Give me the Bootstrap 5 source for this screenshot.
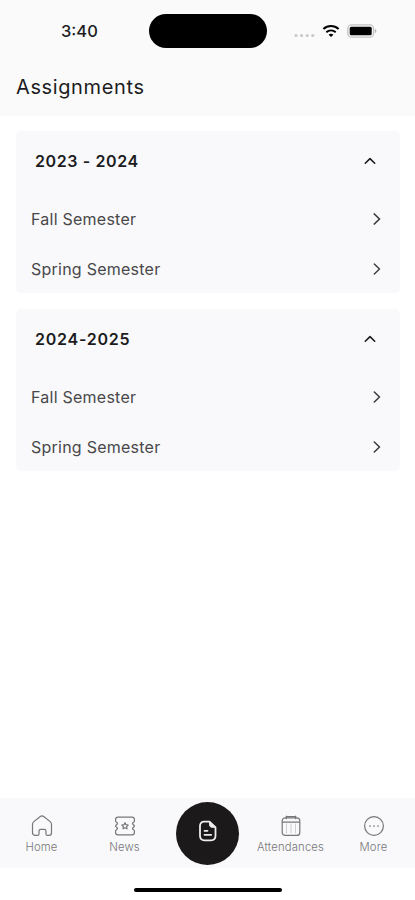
<!DOCTYPE html>
<html lang="en">
<head>
<meta charset="utf-8">
<meta name="viewport" content="width=device-width, initial-scale=1">
<title>Assignments</title>
<link href="https://cdn.jsdelivr.net/npm/bootstrap@5.3.0/dist/css/bootstrap.min.css" rel="stylesheet">
<style>
  body { font-family: Inter, "Liberation Sans", sans-serif; color: #1c1c1e; background: #fff; height: 900px; overflow: hidden; }
  svg { display: block; flex: none; fill: none; stroke: currentColor; stroke-linecap: round; stroke-linejoin: round; }
  .app-header { height: 116px; background: #fafafa; }
  .status-bar { height: 62px; padding: 0 38px 0 61px; }
  .clock { width: 88px; font-size: 16.5px; font-weight: 500; line-height: 20px; }
  .island { width: 118px; height: 34px; background: #000; }
  .status-icons { gap: 7px; color: #000; }
  .page-title { font-size: 20px; font-weight: 400; line-height: 24px; letter-spacing: .62px; padding: 13px 0 0 16px; margin: 0; }
  .year-list { padding: 14.5px 15px 0 16px; gap: 16px; }
  .year-card { background: #f9f9fb; border: 0; border-radius: 5px; height: 162px; }
  .year-head { height: 62px; padding: 0 24px 2px 19px; font-size: 16px; font-weight: 600; letter-spacing: .62px; }
  .year-head.compact { letter-spacing: .76px; }
  .term { height: 50px; padding: 2px 19px 0 15px; font-size: 16px; letter-spacing: .24px; color: #48484a; }
  .term svg { color: #3a3a3c; }
  .tab-bar { height: 70px; background: #f9f9fb; }
  .tab { flex: 1 0 0; min-width: 0; color: #77777a; padding-top: 17px; font-size: 11.3px; line-height: 14px; letter-spacing: .16px; font-weight: 300; }
  .tab span { margin-top: 3px; }
  .tab-main { width: 63px; height: 63px; background: #1c191a; color: #eee; }
  .home-zone { height: 32px; padding-top: 20px; }
  .home-line { width: 148px; height: 4px; background: #000; }
</style>
</head>
<body class="d-flex flex-column">
<header class="app-header">
  <div class="status-bar d-flex align-items-center">
    <div class="clock">3:40</div>
    <div class="island rounded-pill"></div>
    <div class="status-icons d-flex align-items-center ms-auto">
      <svg width="21" height="14" viewBox="0 0 21 14"><g fill="#c8c8ca" stroke="none"><circle cx="2" cy="11.500" r="1.600"/><circle cx="7.600" cy="11.500" r="1.600"/><circle cx="13.200" cy="11.500" r="1.600"/><circle cx="18.800" cy="11.500" r="1.600"/></g></svg>
      <svg width="18" height="14" viewBox="0 0 18 14"><path d="M1.400 5a11 11 0 0 1 15.200 0M4.300 8.200a6.900 6.900 0 0 1 9.400 0" stroke-width="1.900" stroke-linecap="butt"/><path d="M6.600 10.700a3.900 3.900 0 0 1 4.800 0L9 13.100z" fill="currentColor" stroke="none"/></svg>
      <svg width="30" height="14" viewBox="0 0 30 14"><rect x=".8" y=".8" width="25.800" height="12.400" rx="3.800" stroke="#c2c2c4" stroke-width="1.300"/><rect x="2.700" y="2.700" width="22" height="8.600" rx="1.500" fill="#000" stroke="none"/><path d="M27.900 5c2 .7 2 3.300 0 4z" fill="#b4b4b6" stroke="none"/></svg>
    </div>
  </div>
  <h1 class="page-title">Assignments</h1>
</header>
<main class="year-list d-flex flex-column flex-grow-1">
  <section class="card year-card">
    <div class="year-head d-flex align-items-center justify-content-between">2023 - 2024
      <svg width="12" height="12" viewBox="0 0 12 12" stroke-width="1.6"><path d="M1.3 8.2 6 3.6l4.7 4.6"/></svg></div>
    <div class="term d-flex align-items-center justify-content-between">Fall Semester
      <svg width="8" height="12" viewBox="0 0 8 12" stroke-width="1.700"><path d="M1.300 1 6.500 6l-5.200 5"/></svg></div>
    <div class="term d-flex align-items-center justify-content-between">Spring Semester
      <svg width="8" height="12" viewBox="0 0 8 12" stroke-width="1.400"><path d="M1.300 1 6.500 6l-5.200 5"/></svg></div>
  </section>
  <section class="card year-card">
    <div class="year-head compact d-flex align-items-center justify-content-between">2024-2025
      <svg width="12" height="12" viewBox="0 0 12 12" stroke-width="1.6"><path d="M1.3 8.2 6 3.6l4.7 4.6"/></svg></div>
    <div class="term d-flex align-items-center justify-content-between">Fall Semester
      <svg width="8" height="12" viewBox="0 0 8 12" stroke-width="1.500"><path d="M1.300 1 6.500 6l-5.200 5"/></svg></div>
    <div class="term d-flex align-items-center justify-content-between">Spring Semester
      <svg width="8" height="12" viewBox="0 0 8 12" stroke-width="1.500"><path d="M1.300 1 6.500 6l-5.200 5"/></svg></div>
  </section>
</main>
<nav class="tab-bar d-flex">
  <div class="tab d-flex flex-column align-items-center">
    <svg width="22" height="22" viewBox="0 0 22 22" stroke-width="1.200"><path d="M1.500 9.400c0-1.200.4-2 1.300-2.800L9.300 1.500c1-.8 2.400-.8 3.400 0l6.500 5.100c.9.800 1.300 1.600 1.300 2.800v8.300c0 1.700-1 2.700-2.600 2.700h-1.400c-1 0-1.500-.5-1.500-1.500V16c0-1-.6-1.600-1.600-1.600H9.600c-1 0-1.600.6-1.600 1.600v2.900c0 1-.5 1.500-1.500 1.500H4.100c-1.600 0-2.600-1-2.600-2.700z"/></svg>
    <span>Home</span>
  </div>
  <div class="tab d-flex flex-column align-items-center">
    <svg width="22" height="22" viewBox="0 0 22 22" stroke-width="1.200"><path d="M4 2.200h14c1.500 0 2.400.9 2.400 2.400v1.600c0 1-1.900 1.100-1.900 2.300s1.900 1.200 1.900 2.500-1.900 1.300-1.900 2.500 1.900 1.200 1.900 2.300v1.600c0 1.500-.9 2.400-2.400 2.400H4c-1.500 0-2.400-.9-2.400-2.400v-1.600c0-1.100 1.900-1.100 1.900-2.300S1.600 12.300 1.600 11s1.900-1.300 1.900-2.500-1.900-1.300-1.900-2.300V4.600c0-1.500.9-2.400 2.400-2.400z"/><path d="m11 7.700 1 2 2.200.3-1.600 1.600.4 2.200-2-1-2 1 .4-2.200L7.800 10l2.200-.3z"/></svg>
    <span>News</span>
  </div>
  <div class="tab pt-0 d-flex flex-column align-items-center justify-content-center">
    <div class="tab-main rounded-circle d-flex align-items-center justify-content-center">
      <svg class="mb-1" width="20" height="22" viewBox="0 0 20 22" stroke-width="1.800"><path d="M6.200 1.700h5.300l6 5.600v8.500c0 3-1.500 4.500-4.500 4.500H6.500c-3 0-4.500-1.500-4.500-4.500V6c0-2.800 1.400-4.300 4.200-4.300z"/><path d="M11.500 1.900v2.700c0 1.700 1 2.700 2.700 2.700h3.100z" fill="currentColor" stroke-width="1"/><path d="M6.500 10.800h3M6.500 14.800h6.700"/></svg>
    </div>
  </div>
  <div class="tab d-flex flex-column align-items-center">
    <svg width="22" height="22" viewBox="0 0 22 22" stroke-width="1.200"><rect x="2.200" y="2.800" width="17.600" height="17.600" rx="3"/><path d="M2.500 7.200h17M6.300 1.200v2.500M15.700 1.200v2.500M6.300 1.700h9.400"/><path d="M6.500 9v9M11 9v9M15.500 9v9" stroke-width=".6" opacity=".55"/></svg>
    <span>Attendances</span>
  </div>
  <div class="tab d-flex flex-column align-items-center">
    <svg width="22" height="22" viewBox="0 0 22 22" stroke-width="1.200"><circle cx="11" cy="11" r="9.400"/><path d="M7 11h.01M11 11h.01M15 11h.01" stroke-width="1.700"/></svg>
    <span>More</span>
  </div>
</nav>
<div class="home-zone"><div class="home-line rounded-pill mx-auto"></div></div>
<script src="https://cdn.jsdelivr.net/npm/bootstrap@5.3.0/dist/js/bootstrap.bundle.min.js"></script>
</body>
</html>
